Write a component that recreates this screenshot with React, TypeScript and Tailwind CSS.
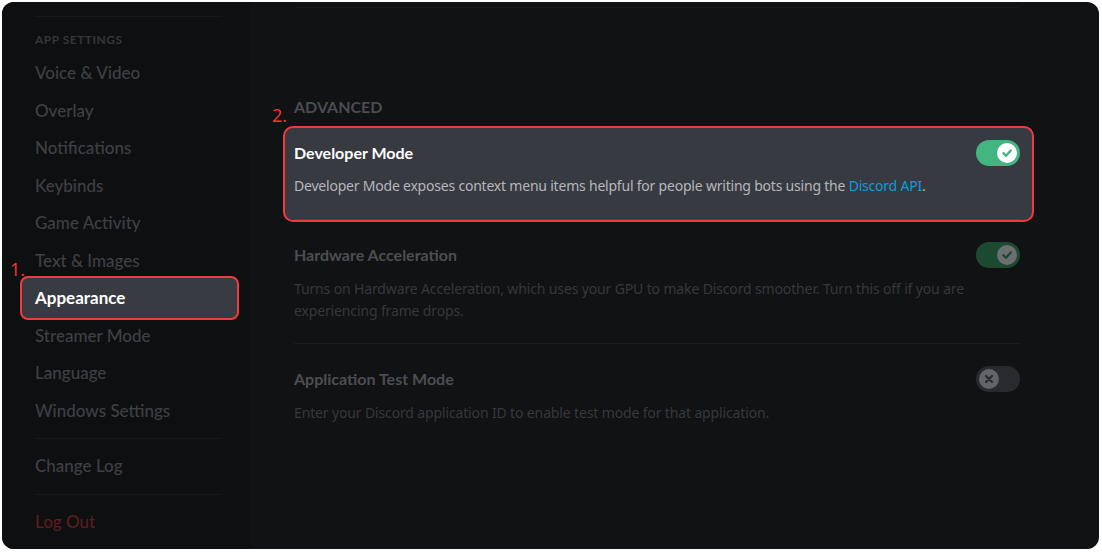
import React from 'react'

const ITEMS = [
  'Voice & Video',
  'Overlay',
  'Notifications',
  'Keybinds',
  'Game Activity',
  'Text & Images',
  'Appearance',
  'Streamer Mode',
  'Language',
  'Windows Settings',
]

function Toggle({ state }: { state: 'on' | 'dimOn' | 'off' }) {
  if (state === 'off') {
    return (
      <div className="w-[44px] h-[26px] rounded-full bg-[#292a2e] flex items-center pl-[3px] flex-shrink-0">
        <div className="w-[20px] h-[20px] rounded-full bg-[#626467] flex items-center justify-center">
          <svg width="10" height="10" viewBox="0 0 10 10">
            <path d="M2 2 L8 8 M8 2 L2 8" stroke="#2a2b2f" strokeWidth="2.2" strokeLinecap="round" />
          </svg>
        </div>
      </div>
    )
  }
  const dim = state === 'dimOn'
  return (
    <div className={`w-[44px] h-[26px] rounded-full flex items-center justify-end pr-[3px] flex-shrink-0 ${dim ? 'bg-[#1b4a31]' : 'bg-[#43b581]'}`}>
      <div className={`w-[20px] h-[20px] rounded-full flex items-center justify-center ${dim ? 'bg-[#6c6e71]' : 'bg-white'}`}>
        <svg width="12" height="12" viewBox="0 0 12 12">
          <path d="M2.3 6.2 L5 8.8 L9.8 3.4" fill="none" stroke={dim ? '#1b4a31' : '#43b581'} strokeWidth="2.3" strokeLinecap="round" strokeLinejoin="round" />
        </svg>
      </div>
    </div>
  )
}

export default function App() {
  return (
    <div className="w-[1102px] h-[552px] bg-white pt-[2px] pl-[2px] pr-[3px] pb-[3px] font-['Lato',sans-serif]">
      <div className="relative w-full h-full rounded-[12px] overflow-hidden flex bg-[#111214]">
        {/* Sidebar */}
        <div className="w-[248px] h-full bg-[#0e0f11] pl-[18px] pr-[11px] pt-[14px]">
          <div className="h-px bg-[#16171a] ml-[15px] mr-[17px]" />
          <div className="mt-[15px] px-[15px] h-[16px] leading-[16px] text-[12px] font-bold uppercase tracking-[0.04em] text-[#34363a]">
            App Settings
          </div>
          <div className="mt-[6px]">
            {ITEMS.map(item =>
              item === 'Appearance' ? (
                <div key={item} className="relative h-[37.5px] flex items-center px-[15px]">
                  <div className="absolute inset-x-0 -top-[3px] -bottom-[3px] rounded-[8px] bg-[#393b42] border-2 border-[#ef3b3b]" />
                  <span className="relative text-[17px] font-bold text-white">{item}</span>
                  <span className="absolute -left-[10px] -top-[23px] text-[18px] text-[#ff3434] font-['Open_Sans',sans-serif]">1.</span>
                </div>
              ) : (
                <div key={item} className="h-[37.5px] flex items-center px-[15px] text-[17px] font-medium text-[#3e4044]">
                  {item}
                </div>
              )
            )}
          </div>
          <div className="mt-[9px] h-px bg-[#16171a] ml-[15px] mr-[17px]" />
          <div className="mt-[8px] h-[37.5px] flex items-center px-[15px] text-[17px] font-medium text-[#3e4044]">Change Log</div>
          <div className="mt-[9px] h-px bg-[#16171a] ml-[15px] mr-[17px]" />
          <div className="mt-[8px] h-[37.5px] flex items-center px-[15px] text-[17px] font-medium text-[#5b1d1f]">Log Out</div>
        </div>

        {/* Content */}
        <div className="flex-1 h-full pt-[5px] pl-[44px] pr-[79px]">
          <div className="h-px bg-[#17181b]" />
          <div className="relative mt-[89px] h-[20px] leading-[20px] text-[16px] font-bold uppercase text-[#4a4c50]">
            Advanced
            <span className="absolute -left-[22px] top-[8px] text-[18px] font-normal text-[#ff3434] font-['Open_Sans',sans-serif]">2.</span>
          </div>

          <div className="mt-[9px] -ml-[11px] -mr-[14px] border-2 border-[#ef3b3b] rounded-[10px] bg-[#383a41] pt-[12px] pl-[9px] pr-[12px]">
            <div className="flex items-center justify-between h-[26px]">
              <span className="text-[16px] font-bold text-white">Developer Mode</span>
              <Toggle state="on" />
            </div>
            <div className="mt-[9px] leading-[22px] text-[14px] text-[#b5b7bb] font-['Noto_Sans',sans-serif] tracking-[-0.015em]">
              Developer Mode exposes context menu items helpful for people writing bots using the{' '}
              <span className="text-[#0b9ddb]">Discord API</span>.
            </div>
            <div className="mt-[22px] h-px bg-[#46484f]" />
          </div>

          <div className="mt-[20px] flex items-center justify-between h-[26px]">
            <span className="text-[16px] font-bold text-[#4c4e52]">Hardware Acceleration</span>
            <Toggle state="dimOn" />
          </div>
          <div className="mt-[10px] leading-[22px] text-[14px] text-[#36383c] font-['Noto_Sans',sans-serif] tracking-[-0.01em] pr-[40px]">
            Turns on Hardware Acceleration, which uses your GPU to make Discord smoother. Turn this off if you are experiencing frame drops.
          </div>
          <div className="mt-[21px] h-px bg-[#1b1c1f]" />

          <div className="mt-[22px] flex items-center justify-between h-[26px]">
            <span className="text-[16px] font-bold text-[#4c4e52]">Application Test Mode</span>
            <Toggle state="off" />
          </div>
          <div className="mt-[10px] leading-[22px] text-[14px] text-[#36383c] font-['Noto_Sans',sans-serif] tracking-[-0.01em]">
            Enter your Discord application ID to enable test mode for that application.
          </div>
        </div>
      </div>
    </div>
  )
}
